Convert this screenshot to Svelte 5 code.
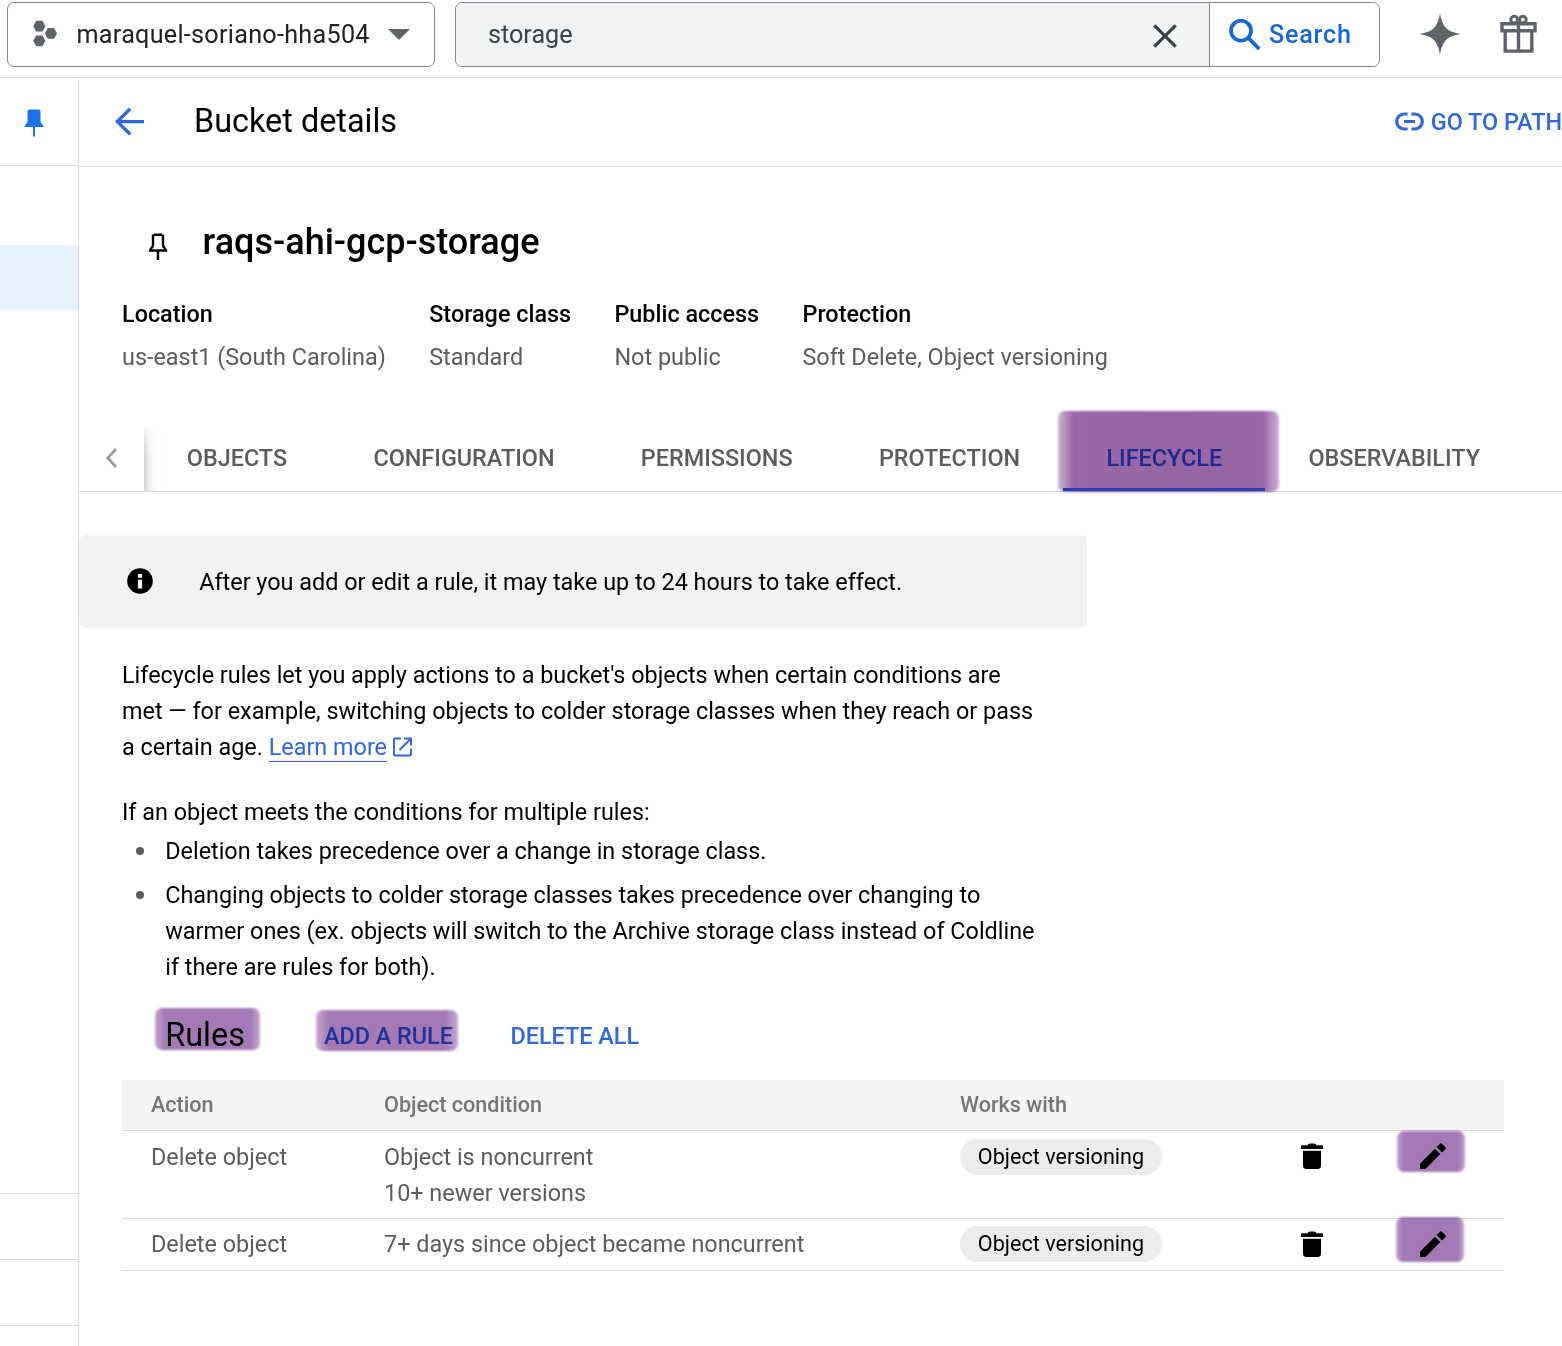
<script>
  const facts = [
    { label: 'Location', value: 'us-east1 (South Carolina)' },
    { label: 'Storage class', value: 'Standard' },
    { label: 'Public access', value: 'Not public' },
    { label: 'Protection', value: 'Soft Delete, Object versioning' }
  ];
  const tabs = ['Objects', 'Configuration', 'Permissions', 'Protection', 'Lifecycle', 'Observability'];
  const active = 'Lifecycle';
  const rules = [
    { action: 'Delete object', conditions: ['Object is noncurrent', '10+ newer versions'], works: 'Object versioning' },
    { action: 'Delete object', conditions: ['7+ days since object became noncurrent'], works: 'Object versioning' }
  ];
</script>

<div class="page">
  <header class="topbar">
    <button class="picker">
      <svg width="24" height="27" viewBox="0 0 24 27" fill="#5f6368">
        <path d="M.2 6.2 3.2.8h6.2l3 5.4-3 5.2H3.2zM11.8 13.4l3-5.4H21l3 5.4-3 5.4h-6.2zM.2 20.8l3-5.2h6.2l3 5.2-3 5.4H3.2z" />
      </svg>
      <span>maraquel-soriano-hha504</span>
      <svg class="caret" width="22" height="11" viewBox="0 0 22 11" fill="#5f6368"><path d="M0 0h22L11 11z" /></svg>
    </button>
    <div class="search">
      <div class="field">
        <span>storage</span>
        <svg width="24" height="24" viewBox="0 0 24 24" stroke="#3c4043" stroke-width="3.2"><path d="M1.3 1.3 22.7 22.7M22.7 1.3 1.3 22.7" /></svg>
      </div>
      <button class="go">
        <svg width="32" height="32" viewBox="0 0 32 32" fill="none" stroke="#1967d2" stroke-width="3.8">
          <circle cx="12" cy="11.7" r="10" /><path d="M19 18.7 30.3 30" />
        </svg>
        <span>Search</span>
      </button>
    </div>
    <svg class="spark" width="42" height="42" viewBox="0 0 42 42" fill="#5f6368">
      <path d="M21 0C22.2 7.5 24 11.8 27 15c3 3 7.5 4.8 15 6-7.5 1.2-12 3-15 6-3 3.2-4.8 7.5-6 15-1.2-7.5-3-11.8-6-15-3-3-7.5-4.8-15-6 7.5-1.2 12-3 15-6 3-3.2 4.8-7.5 6-15z" />
    </svg>
    <svg class="gift" width="37" height="39" viewBox="0 0 37 39" fill="none" stroke="#5f6368" stroke-width="3.4">
      <path d="M2 9.700h33v7H2zM5.200 17v20.100h26.600V17M18.500 8v29" />
      <circle cx="14.200" cy="5.600" r="3.400" stroke-width="3" /><circle cx="22.800" cy="5.600" r="3.400" stroke-width="3" />
    </svg>
  </header>

  <div class="body">
    <aside>
      <div class="pinrow">
        <svg width="20" height="28" viewBox="0 0 20 28" fill="#1a73e8">
          <path d="M5.500.5h9q2 0 2 2V12c0 2.500 3 3.500 3 6H11v9.500H9V18H.5c0-2.500 3-3.500 3-6V2.500q0-2 2-2z" />
        </svg>
      </div>
      <div class="selected"></div>
      <div class="foot"></div>
      <div class="foot"></div>
      <div class="foot"></div>
    </aside>

    <main>
      <div class="titlebar">
        <svg width="30" height="28" viewBox="0 0 30 28" fill="none" stroke="#3367d6" stroke-width="3.4"><path d="M29 13.600H3M15.200.8 2.400 13.600l12.800 12.800" /></svg>
        <h1>Bucket details</h1>
        <a class="path" href="#path">
          <svg width="29" height="19" viewBox="0 0 29 19" fill="none" stroke="#3367d6" stroke-width="3.2">
            <path d="M12.600 2H9.200a7.500 7.500 0 0 0 0 15h3.400M16.400 2h3.400a7.500 7.500 0 0 1 0 15h-3.400M9 9.500h11" />
          </svg>
          <span>GO TO PATH</span>
        </a>
      </div>

      <section class="bucket">
        <div class="name">
          <svg width="20" height="28" viewBox="0 0 20 28" fill="none" stroke="#000" stroke-width="2.4">
            <path d="M5.700 1.700h8.600M5 1.500V12c0 2.600-2.800 3.200-3 5.500h16c-.2-2.300-3-2.900-3-5.500V1.500M10 18v9" />
          </svg>
          <h2>raqs-ahi-gcp-storage</h2>
        </div>
        <dl>
          {#each facts as f}
            <div><dt>{f.label}</dt><dd>{f.value}</dd></div>
          {/each}
        </dl>
      </section>

      <nav>
        <div class="scroll">
          <svg width="11" height="20" viewBox="0 0 11 20" fill="none" stroke="#999" stroke-width="2.7"><path d="M10 1 1.800 10l8.200 9" /></svg>
        </div>
        <div class="strip">
          <i class="shade"></i>
          {#each tabs as t}
            <a href="#{t}" class:active={t === active}>{t}{#if t === active}<i class="marker"></i><i class="line"></i>{/if}</a>
          {/each}
        </div>
      </nav>

      <div class="banner">
        <svg width="26" height="26" viewBox="0 0 26 26"><circle cx="13" cy="13" r="12.800" /><path d="M10.900 6h4.200v3.800h-4.200zM10.900 11.700h4.200v8.800h-4.200z" fill="#f1f1f1" /></svg>
        <span>After you add or edit a rule, it may take up to 24 hours to take effect.</span>
      </div>

      <div class="text">
        <p>
          Lifecycle rules let you apply actions to a bucket's objects when certain conditions are<br />
          met — for example, switching objects to colder storage classes when they reach or pass<br />
          a certain age. <a href="#learn">Learn more</a>
          <svg width="19" height="20" viewBox="0 0 19 20" fill="none" stroke="#3367d6" stroke-width="1.9"><path d="M8 1.500H2q-1 0-1 1v15q0 1 1 1h15q1 0 1-1v-6M11 1.500h7v7M17.500 2 6.500 13" /></svg>
        </p>
        <p class="lead">If an object meets the conditions for multiple rules:</p>
        <ul>
          <li>Deletion takes precedence over a change in storage class.</li>
          <li>
            Changing objects to colder storage classes takes precedence over changing to<br />
            warmer ones (ex. objects will switch to the Archive storage class instead of Coldline<br />
            if there are rules for both).
          </li>
        </ul>
      </div>

      <div class="ruleshead">
        <h3>Rules<i class="marker"></i></h3>
        <button class="add">ADD A RULE<i class="marker"></i></button>
        <button>DELETE ALL</button>
      </div>

      <div class="table">
        <div class="row head"><span>Action</span><span>Object condition</span><span>Works with</span></div>
        {#each rules as r, i}
          <div class="row">
            <span>{r.action}</span>
            <span>{#each r.conditions as c}<div>{c}</div>{/each}</span>
            <span><em>{r.works}</em></span>
            <span class="icon">
              <svg width="22" height="26" viewBox="0 0 22 26"><path d="M0 2.300h6.500Q7 .4 9 .4h4q2 0 2.500 1.900H22V6H0zM2 7.800h18v14.800Q20 26 16.500 26h-11Q2 26 2 22.600z" /></svg>
            </span>
            <span class="icon edit">
              <svg width="26" height="26" viewBox="0 0 26 26"><path d="M0 20.700 14.900 5.700l5.400 5.300L5.400 26H0zM16.600 4l3-3q1.300-1.300 2.600 0L25 3.800q1.300 1.300 0 2.600l-3 3z" /></svg>
              <i class="marker m{i}"></i>
            </span>
          </div>
        {/each}
      </div>
    </main>
  </div>
</div>

<style>
  :global(body) { background: #fff; overflow: hidden; }
  .page { width: 1562px; height: 1346px; overflow: hidden; font: 400 23.4px/36px Roboto, sans-serif; color: #000; display: flex; flex-direction: column; background: #fff; }
  .page * { box-sizing: border-box; }
  svg { display: block; flex: none; }
  button { font: inherit; background: none; border: 0; padding: 0; margin: 0; }
  a { text-decoration: none; color: #3367d6; }
  h1, h2, h3, p, ul, dl, dd { margin: 0; padding: 0; }

  .topbar { height: 78px; flex: none; border-bottom: 1px solid #dadce0; display: flex; align-items: flex-start; padding: 2px 0 0 7px; }
  .picker { width: 428px; height: 65px; border: 1px solid #80868b; border-radius: 7px; display: flex; align-items: center; padding: 0 0 2px 25px; font-size: 25.2px; letter-spacing: .27px; color: #202124; }
  .picker span { margin-left: 19.5px; padding-top: 2px; }
  .caret { margin-left: 18px; margin-top: 1px; }
  .search { width: 925px; height: 65px; margin-left: 20px; border: 1px solid #80868b; border-radius: 7px; display: flex; font-size: 25.2px; overflow: hidden; }
  .field { width: 754px; background: #f1f3f4; border-right: 1px solid #80868b; display: flex; align-items: center; justify-content: space-between; padding: 0 32px; color: #3c4043; }
  .field svg { margin-top: 3px; }
  .go { display: flex; align-items: center; color: #1967d2; font-weight: 500; letter-spacing: .75px; padding-left: 19px; }
  .go span { margin-left: 8px; }
  .spark { margin: 11px 0 0 38.5px; }
  .gift { margin: 12px 0 0 39.5px; }

  .body { flex: 1; display: flex; min-height: 0; }
  aside { width: 79px; flex: none; border-right: 1px solid #dadce0; display: flex; flex-direction: column; }
  .pinrow { height: 88px; flex: none; border-bottom: 1px solid #dadce0; padding: 31px 0 0 24px; }
  .selected { height: 65px; margin: 79px 0 883px; background: #e6f0ff; flex: none; }
  .foot { height: 66px; flex: none; border-top: 1px solid #dadce0; }

  main { flex: 1; min-width: 0; }
  .titlebar { height: 89px; border-bottom: 1px solid #dadce0; display: flex; align-items: center; padding: 0 0 1px 36px; white-space: nowrap; overflow: hidden; }
  h1 { font-size: 32.4px; font-weight: 400; margin-left: 49px; width: 1201px; padding-bottom: 2px; }
  .path { display: flex; align-items: center; gap: 7px; font-weight: 500; }

  .bucket { height: 259px; padding: 57px 0 0 43px; }
  .name { display: flex; align-items: center; padding-left: 26px; height: 36px; }
  .name svg { margin-top: 10px; }
  h2 { font-size: 36px; font-weight: 500; margin-left: 34.6px; }
  dl { display: flex; gap: 43.36px; margin-top: 36px; white-space: nowrap; }
  dt { font-weight: 500; margin-bottom: 7px; }
  dd { color: #5c5c5c; }

  nav { height: 66px; border-bottom: 1px solid #dadce0; display: flex; }
  .scroll { width: 65px; padding: 22px 0 0 27px; }
  .strip { position: relative; flex: 1; display: flex; line-height: 64px; text-transform: uppercase; font-weight: 500; white-space: nowrap; }
  .shade { position: absolute; left: 0; top: 0; width: 18px; height: 65px; background: linear-gradient(90deg, rgba(0,0,0,.17), rgba(0,0,0,.05) 30%, rgba(0,0,0,.012) 65%, transparent); mask-image: linear-gradient(180deg, rgba(0,0,0,.15), #000 40%); }
  .strip a { color: #5c5c5c; padding: 0 43.16px; position: relative; height: 65px; }
  .strip a:nth-child(2) { padding-left: 42.8px; }
  .strip a.active { color: #3367d6; }
  .line { position: absolute; left: 0; right: 0; bottom: 0; height: 3px; background: #2a3fae; }

  .marker { position: absolute; mix-blend-mode: multiply; border-radius: 7px; background: linear-gradient(90deg, rgba(148,98,170,.55), #a37ab5 9%, #a37ab5 91%, rgba(148,98,170,.55)); filter: blur(.8px); }
  .active .marker { left: -5px; top: -15px; width: 221px; height: 81px; background: linear-gradient(90deg, rgba(152,103,168,.5), #9968a9 7%, #9565a5 50%, #9968a9 93%, rgba(152,103,168,.5)); }

  .banner { width: 1008px; height: 93px; margin-top: 43px; border-radius: 7px; background: #f1f1f1; display: flex; align-items: center; padding-left: 48px; }
  .banner svg { margin-bottom: 1px; }
  .banner span { margin-left: 46.2px; padding-top: 1px; }

  .text { padding: 29px 0 0 43px; white-space: nowrap; }
  .text p a { border-bottom: 1px solid #3367d6; }
  .text p svg { display: inline-block; vertical-align: -2px; }
  .text .lead { margin-top: 29px; }
  ul { list-style: none; margin-top: 3px; }
  li { padding-left: 43.2px; margin-bottom: 8px; position: relative; }
  li::before { content: ''; position: absolute; left: 14px; top: 14px; width: 8px; height: 8px; border-radius: 50%; background: #5c5c5c; }

  .ruleshead { display: flex; align-items: center; height: 36px; margin-top: 32px; padding-left: 86.3px; }
  h3 { font-size: 32.4px; font-weight: 400; position: relative; margin-right: 79px; }
  h3 .marker { left: -10px; top: -9px; width: 105px; height: 42px; }
  .ruleshead button { font-weight: 500; color: #3367d6; position: relative; margin-right: 57.5px; padding-top: 1px; }
  .add .marker { left: -8px; top: -7px; width: 142px; height: 41px; }

  .table { margin: 27px 0 0 43px; width: 1382px; }
  .row { display: grid; grid-template-columns: 233px 576px 338px 119px 1fr; border-bottom: 1px solid #dadce0; padding: 8px 0 7px 29px; color: #5c5c5c; }
  .row.head { background: #f4f4f4; font-size: 21.6px; font-weight: 500; color: #757575; padding: 7px 0 7px 29px; }
  .row:not(.head) { height: 88px; }
  .row:not(.head):last-child { height: 52px; padding-top: 7px; }
  em { display: block; width: 202px; height: 36px; border-radius: 18px; background: #ebebeb; color: #000; font-style: normal; font-size: 21.6px; line-height: 35px; text-align: center; }
  .icon { position: relative; padding: 4px 0 0 3px; }
  .row:last-child .icon { padding-top: 5px; }
  .edit .marker { left: -20px; top: -8px; width: 68px; height: 41px; }
  .edit .m1 { left: -21px; top: -9px; height: 45px; }
</style>
